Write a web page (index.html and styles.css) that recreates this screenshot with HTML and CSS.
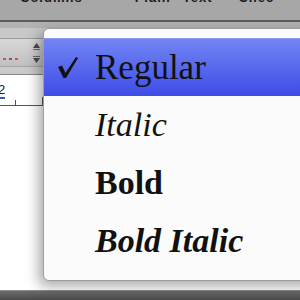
FILE: index.html
```html
<!DOCTYPE HTML>
<html lang="en">

<head>
    <title>Font style menu</title>
    <meta charset="utf-8">
    <link rel="stylesheet" href="styles.css">
</head>

<body>

    <div id="window">
        <div id="toolbar">
            <div class="labels">
                <span class="lbl w1">Columns</span>
                <span class="lbl w2">Plain</span>
                <span class="lbl w3">Text</span>
                <span class="lbl w4">Chec</span>
            </div>
        </div>
        <div class="divider"></div>
        <div class="strip"></div>

        <div id="format">
            <div class="format-top"></div>
            <div class="field">
                <div class="field-left">
                    <span class="dots"><i></i><i></i><i></i></span>
                    <span class="stepper">
                        <svg width="9" height="22" viewBox="0 0 9 22">
                            <path d="M4.5 1 L8 6 L1 6 Z" fill="#4a4a4a"/>
                            <rect x="1" y="7" width="7" height="1" fill="#6a6a6a"/>
                            <rect x="1" y="14" width="7" height="1" fill="#6a6a6a"/>
                            <path d="M1 16 L8 16 L4.5 21 Z" fill="#4a4a4a"/>
                        </svg>
                    </span>
                </div>
            </div>
            <div class="format-sub"></div>
        </div>

        <div id="page">
            <div class="page-left">
                <span class="num">2</span>
                <div class="ruler">
                    <span class="indent"></span>
                    <span class="tick t1"></span>
                    <span class="tick t2"></span>
                </div>
            </div>
        </div>

        <div id="status"></div>

        <ul id="menu">
            <li class="item active">
                <svg class="check" width="22" height="24" viewBox="0 0 22 24">
                    <path d="M1 12 L5 10.5 L8.5 18 L19 2 L21 3 L9 23 L6.5 23 Z" fill="#111"/>
                </svg>
                <span class="regular">Regular</span>
            </li>
            <li class="item"><span class="italic">Italic</span></li>
            <li class="item"><span class="bold">Bold</span></li>
            <li class="item"><span class="bold-italic">Bold Italic</span></li>
        </ul>
    </div>

</body>

</html>
```

FILE: styles.css
```css
html {
    height: 100%;
}
body {
    margin: 0;
    padding: 0;
    background: #ffffff;
    font-family: "Liberation Serif", serif;
    height: 100%;
}
#window {
    position: relative;
    width: 300px;
    height: 300px;
    overflow: hidden;
    display: flex;
    flex-direction: column;
}
#toolbar {
    height: 20px;
    background-color: #a7a7a7;
    overflow: hidden;
}
.labels {
    display: flex;
    margin-top: -9px;
    font: bold 13px "Liberation Sans", sans-serif;
    line-height: 13px;
    color: #1a1a1a;
    letter-spacing: 1px;
}
.lbl.w1 {
    margin-left: 20px;
}
.lbl.w2 {
    margin-left: 52px;
}
.lbl.w3 {
    margin-left: 12px;
}
.lbl.w4 {
    margin-left: 26px;
}
.divider {
    height: 2px;
    background-color: #5c5c5c;
}
.strip {
    height: 6px;
    background-color: #b3b3b3;
}
#format {
    display: flex;
    flex-direction: column;
}
.format-top {
    height: 10px;
    background-color: #c8c8c8;
    border-bottom: 1px solid #9a9a9a;
}
.field {
    height: 27px;
    background: linear-gradient(#d8d8d8, #c0c0c0);
    border-bottom: 1px solid #a4a4a4;
}
.field-left {
    width: 43px;
    height: 100%;
    display: flex;
    justify-content: space-between;
    align-items: flex-start;
}
.dots {
    display: flex;
    gap: 3px;
    margin: 19px 0 0 3px;
}
.dots i {
    width: 3px;
    height: 2px;
    background-color: #c0603a;
}
.dots i:nth-child(2) {
    background-color: #a04a70;
}
.stepper {
    margin: 3px 2px 0 0;
}
.format-sub {
    height: 7px;
    background-color: #cacaca;
    border-bottom: 1px solid #888888;
}
#page {
    flex: 1;
    background-color: #ffffff;
}
.page-left {
    width: 43px;
    display: flex;
    flex-direction: column;
}
.num {
    margin: 9px 0 0 -2px;
    font: 13px "Liberation Sans", sans-serif;
    line-height: 12px;
    color: #222;
}
.ruler {
    position: relative;
    height: 8px;
    margin-top: 1px;
    border-bottom: 1px solid #555;
}
.indent {
    position: absolute;
    left: 0;
    top: 0;
    width: 5px;
    height: 2px;
    background-color: #3a5bb0;
}
.tick {
    position: absolute;
    bottom: 0;
    width: 1px;
    background-color: #555;
}
.tick.t1 {
    left: 15px;
    height: 5px;
}
.tick.t2 {
    left: 42px;
    height: 8px;
}
#status {
    height: 9px;
    background: linear-gradient(#6c6c6c, #4a4a4a);
    border-top: 1px solid #8a8a8a;
}

/* popup menu */
#menu {
    position: absolute;
    top: 28px;
    left: 43px;
    right: -20px;
    margin: 0;
    padding: 9px 0 10px;
    list-style: none;
    background-color: #fbfbfb;
    border: 1px solid #9d9d9d;
    border-radius: 6px;
    box-shadow: -4px 5px 14px rgba(0, 0, 0, 0.35);
}
.item {
    position: relative;
    height: 58px;
    line-height: 58px;
    padding-left: 51px;
    font-size: 34px;
    color: #111;
}
.item.active {
    background: linear-gradient(#7185f3, #3e4ce6);
    border-top: 1px solid #8c9af4;
    height: 57px;
    line-height: 57px;
    font-size: 35px;
}
.check {
    position: absolute;
    left: 13px;
    top: 16px;
}
.italic {
    font-style: italic;
}
.bold {
    font-weight: bold;
}
.bold-italic {
    font-weight: bold;
    font-style: italic;
}
```
